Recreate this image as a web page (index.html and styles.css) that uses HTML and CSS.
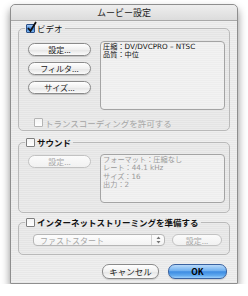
FILE: index.html
```html
<!doctype html>
<html lang="ja">
<head>
    <meta charset="UTF-8">
    <title>ムービー設定</title>
    <link rel="stylesheet" href="styles.css">
</head>
<body>
    <div class="window">
        <div class="titlebar">ムービー設定</div>
        <div class="content">

            <fieldset class="group">
                <legend><span class="check on"><svg width="11" height="12" viewBox="0 0 11 12"><path d="M2 7 L4.5 10 L10 1" fill="none" stroke="#111" stroke-width="1.8"/></svg></span>ビデオ</legend>
                <div class="body video">
                    <div class="row">
                        <div class="buttons">
                            <button class="btn">設定...</button>
                            <button class="btn">フィルタ...</button>
                            <button class="btn">サイズ...</button>
                        </div>
                        <div class="info tall">
                            <div>圧縮：DV/DVCPRO – NTSC</div>
                            <div>品質：中位</div>
                        </div>
                    </div>
                    <div class="option disabled"><span class="check"></span>トランスコーディングを許可する</div>
                </div>
            </fieldset>

            <fieldset class="group">
                <legend class="bold"><span class="check"></span>サウンド</legend>
                <div class="body sound">
                    <div class="row">
                        <div class="buttons">
                            <button class="btn" disabled>設定...</button>
                        </div>
                        <div class="info short disabled">
                            <div>フォーマット：圧縮なし</div>
                            <div>レート：44.1 kHz</div>
                            <div>サイズ：16</div>
                            <div>出力：2</div>
                        </div>
                    </div>
                </div>
            </fieldset>

            <fieldset class="group">
                <legend class="bold"><span class="check"></span>インターネットストリーミングを準備する</legend>
                <div class="body stream">
                    <div class="popup">
                        <span>ファストスタート</span>
                        <span class="arrows"><svg width="5" height="8" viewBox="0 0 5 8"><path d="M0.5 3 L2.5 0.5 L4.5 3 Z M0.5 5 L2.5 7.5 L4.5 5 Z" fill="#777"/></svg></span>
                    </div>
                    <button class="btn small" disabled>設定...</button>
                </div>
            </fieldset>

            <div class="actions">
                <button class="btn cancel">キャンセル</button>
                <button class="btn default">OK</button>
            </div>
        </div>
    </div>
</body>
</html>
```

FILE: styles.css
```css
body {
    margin: 0;
    background: #fff;
    font-family: "Noto Sans CJK JP", "Noto Sans", sans-serif;
    color: #111;
}

.window {
    width: 226px;
    margin: 4px 0 0 10px;
    border: 1px solid #8e8e8e;
    border-radius: 5px 5px 0 0;
    box-shadow: 0 5px 9px rgba(0, 0, 0, 0.45);
    background: repeating-linear-gradient(#efefef 0, #efefef 1px, #e8e8e8 1px, #e8e8e8 2px);
    overflow: hidden;
}

.titlebar {
    height: 15px;
    line-height: 15px;
    text-align: center;
    font-size: 9px;
    color: #222;
    background: linear-gradient(#eeeeee, #dcdcdc);
    border-bottom: 1px solid #a8a8a8;
    border-radius: 5px 5px 0 0;
}

.content {
    padding: 2px 7px 4px 7px;
}

.group {
    margin: 0;
    padding: 0;
    border: 1px solid #b9b9b9;
    border-radius: 5px;
    background: rgba(0, 0, 0, 0.015);
    min-width: 0;
}

.group + .group {
    margin-top: 6px;
}

.group:nth-of-type(3) {
    margin-top: 4px;
}

.group legend {
    margin-left: 6px;
    padding: 0 2px 0 1px;
    height: 11px;
    line-height: 11px;
    font-size: 8.5px;
    display: flex;
    align-items: center;
}

.group legend.bold {
    font-weight: bold;
}

.check {
    width: 9px;
    height: 9px;
    box-sizing: border-box;
    border: 1px solid #7f7f7f;
    border-radius: 1px;
    background: linear-gradient(#f4f4f4, #ffffff);
    margin-right: 2px;
    flex: none;
    position: relative;
}

.check.on {
    border-color: #2d4f86;
    background: linear-gradient(#a6cbf5, #3b82d9 55%, #7db6f0);
}

.check svg {
    position: absolute;
    left: -1px;
    top: -4px;
}

.body {
    padding: 7px 4px 2px 9px;
}

.body.sound {
    padding: 6px 4px 9px 9px;
}

.body.stream {
    padding: 6px 6px 8px 14px;
    display: flex;
    gap: 7px;
}

.row {
    display: flex;
    gap: 9px;
}

.buttons {
    width: 63px;
    display: flex;
    flex-direction: column;
    gap: 6px;
    padding-top: 2px;
}

.sound .buttons {
    padding-top: 1px;
}

.btn {
    height: 13px;
    padding: 0;
    font-family: inherit;
    font-size: 8px;
    line-height: 11px;
    color: #222;
    border: 1px solid #8a8a8a;
    border-radius: 7px;
    background: linear-gradient(#ffffff, #f0f0f0 50%, #e4e4e4 51%, #fbfbfb);
    box-shadow: 0 1px 1px rgba(0, 0, 0, 0.15);
}

.btn:disabled {
    color: #a8a8a8;
    border-color: #c2c2c2;
    box-shadow: none;
    background: linear-gradient(#fbfbfb, #f1f1f1);
}

.btn.small {
    width: 50px;
    height: 12px;
}

.info {
    flex: 1;
    box-sizing: border-box;
    border: 1px solid #a4a4a4;
    border-radius: 4px;
    background: rgba(255, 255, 255, 0.35);
    padding: 1px 2px;
    font-family: "DejaVu Sans", "Noto Sans CJK JP", sans-serif;
    font-size: 7.2px;
    line-height: 8.4px;
}

.info.tall {
    height: 69px;
}

.info.short {
    height: 49px;
}

.info.disabled {
    color: #9a9a9a;
}

.option {
    margin-top: 7px;
    padding-left: 6px;
    height: 11px;
    display: flex;
    align-items: center;
    font-size: 8.5px;
}

.option.disabled {
    color: #a4a4a4;
}

.option.disabled .check {
    border-color: #b4b4b4;
}

.popup {
    width: 132px;
    height: 12px;
    box-sizing: border-box;
    border: 1px solid #b6b6b6;
    border-radius: 4px;
    background: linear-gradient(#fdfdfd, #f3f3f3);
    display: flex;
    justify-content: space-between;
    align-items: center;
    padding-left: 6px;
    font-size: 8px;
    color: #a6a6a6;
}

.popup .arrows {
    width: 12px;
    height: 10px;
    border-left: 1px solid #d2d2d2;
    display: flex;
    align-items: center;
    justify-content: center;
}

.actions {
    display: flex;
    justify-content: flex-end;
    gap: 9px;
    margin-top: 9px;
    padding-right: 3px;
}

.actions .btn {
    height: 15px;
    font-size: 8.5px;
}

.btn.cancel {
    width: 57px;
}

.btn.default {
    width: 59px;
    color: #000;
    font-weight: bold;
    border-color: #3a62a0;
    background: linear-gradient(#b9dafa, #6fb0f0 45%, #3d8ce2 52%, #5fa8ee 80%, #9dd0fb);
}
```
